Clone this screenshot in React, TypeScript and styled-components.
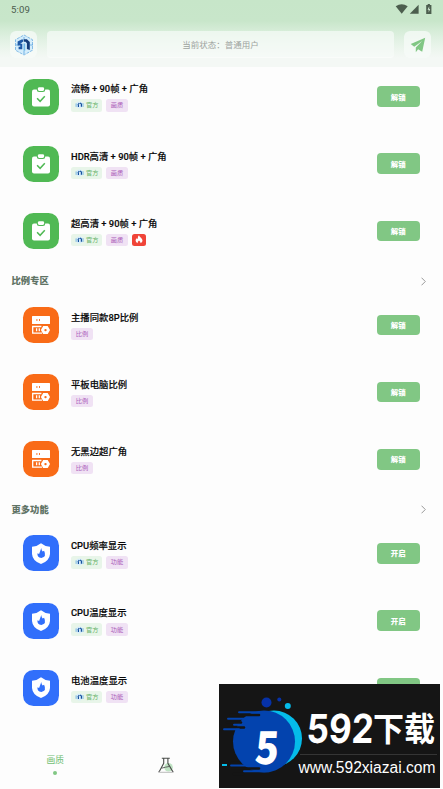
import React from "react";
import styled, { createGlobalStyle } from "styled-components";

const Global = createGlobalStyle`
  * { box-sizing: border-box; }
  html, body { margin: 0; background: #fdfdfd; overflow: hidden; }
  body { font-family: Roboto, "Noto Sans CJK SC", sans-serif; }
  svg { display: block; flex: none; }
`;

const Screen = styled.div`
  position: relative;
  width: 443px;
  height: 789px;
  overflow: hidden;
  display: flex;
  flex-direction: column;
  background: #fdfdfd;
`;

const Header = styled.header`
  flex: none;
  height: 67px;
  background: linear-gradient(#c7e6c9 0, #c8e6ca 21px, #d5ecd7 30px, #e3f2e5 41px, #eef6ef 51px, #f4f8f5 58px, #f4f8f5 100%);
`;

const StatusBar = styled.div`
  height: 31px;
  padding: 4px 10px 0 11px;
  display: flex;
  justify-content: space-between;
  font-size: 9.6px;
  line-height: 12px;
  letter-spacing: 0.1px;
  color: #4c5e4e;
`;

const TopRow = styled.div`
  display: flex;
  gap: 10px;
  padding: 0 12px 0 10px;
`;

const Tile = styled.div`
  width: 27px;
  height: 27px;
  border-radius: 6px;
  display: grid;
  place-items: center;
  background: rgba(247, 251, 248, 0.75);
`;

const StatusField = styled.div`
  flex: 1;
  height: 27px;
  border-radius: 4px;
  display: grid;
  place-items: center;
  background: rgba(247, 251, 248, 0.7);
  border-bottom: 1px solid #fafcfa;
  font-size: 8.5px;
  color: #9da39e;
`;

const List = styled.main`
  flex: 1;
  min-height: 0;
  overflow: hidden;
  margin-top: -4.1px;
`;

const SectionHead = styled.div`
  height: 26.9px;
  padding: 7px 17px 0 11.5px;
  display: flex;
  align-items: center;
  justify-content: space-between;
  font-size: 9.3px;
  font-weight: 900;
  line-height: 20px;
  color: #607365;
`;

const Row = styled.div`
  height: 67.2px;
  display: flex;
  align-items: center;
  padding: 0 23px;
`;

const AppIcon = styled.div<{ $color: string }>`
  width: 36px;
  height: 36px;
  border-radius: 10.5px;
  display: grid;
  place-items: center;
  background: ${(p) => p.$color};
`;

const Info = styled.div`
  flex: 1;
  margin-left: 12px;
  padding-top: 1px;
`;

const Title = styled.div`
  font-size: 9.35px;
  line-height: 13px;
  font-weight: 500;
  color: #080808;
  -webkit-text-stroke: 0.15px #080808;
  white-space: pre;
  margin-bottom: 4px;
`;

const Tags = styled.div`
  display: flex;
  gap: 4px;
`;

const tones = {
  green: ["#e8f5e9", "#65b368"],
  purple: ["#f0e2f4", "#aa5bb9"],
  red: ["#f04438", "#ffffff"],
} as const;

const Tag = styled.span<{ $tone: keyof typeof tones; $width: number }>`
  width: ${(p) => p.$width}px;
  height: 12.3px;
  border-radius: 2.5px;
  display: flex;
  align-items: center;
  justify-content: center;
  gap: 2.5px;
  font-size: 6.2px;
  line-height: 12px;
  background: ${(p) => tones[p.$tone][0]};
  color: ${(p) => tones[p.$tone][1]};
`;

const ActionButton = styled.button`
  width: 43.5px;
  height: 20.5px;
  border: 0;
  padding: 0;
  border-radius: 4px;
  background: #81c784;
  color: #fff;
  font: 900 7.4px/20px "Noto Sans CJK SC", sans-serif;
`;

const Nav = styled.nav`
  flex: none;
  height: 67px;
  padding-top: 30px;
  display: grid;
  grid-template-columns: repeat(4, 1fr);
  justify-items: center;
  background: #fdfdfd;
`;

const NavItem = styled.div<{ $iconOnly?: boolean }>`
  display: flex;
  flex-direction: column;
  align-items: center;
  padding-top: ${(p) => (p.$iconOnly ? 5 : 0)}px;
  font-size: 8.8px;
  line-height: 17px;
  color: #70bd73;
`;

const Dot = styled.i`
  width: 4px;
  height: 4px;
  margin-top: 1.5px;
  border-radius: 50%;
  background: #81c784;
`;

const Banner = styled.aside`
  position: absolute;
  left: 219px;
  top: 684px;
  width: 221px;
  height: 104px;
  background: #151515;
`;

const StatusIcons = () => (
  <svg width="38" height="12" viewBox="0 0 38 12" fill="#4c5e4e">
    <path d="M.7 2.3Q6.7-2 12.7 2.3L6.7 9.8Z" />
    <path d="M23.6.8V9.8H14.8Z" />
    <path d="M31.2 1h1.5V0h2.2v1h1.5v9h-5.2Z" />
    <path d="M34.2 2.3 32.6 5.8h1.1v2.7l1.5-3.6h-1Z" fill="#d4ecd5" />
  </svg>
);

const HexLogo = () => (
  <svg width="20" height="22" viewBox="0 0 20 22">
    <path d="M10 1 18.5 5.7V16.2L10 21 1.5 16.2V5.7Z" fill="#d4edfb" stroke="#79b6e4" strokeWidth=".9" strokeDasharray="3 1" />
    <path d="M10 3V6M10 17v3M2 11H5M16 11h3" stroke="#4c9bdd" strokeWidth=".7" />
    <path d="M3.6 7.6 7.6 5.400H9.200V7.600L6.200 9.800H8.300V15.200H4.600V12.800H6.300V11.500H3.600Z" fill="#1f5aa6" />
    <path d="M9.800 5.300h3.100l2.900 2.600v8.100l-2.900-1V9.300l-1.400-1.600H9.800Z" fill="#153d7b" />
    <path d="M9.500 9.500h1.700v7.300H9.500Z" fill="#72bae8" />
  </svg>
);

const PlaneIcon = () => (
  <svg width="16" height="16" viewBox="0 0 16 16" fill="#81c784">
    <path d="M15.200.8.700 7l3.500 2.700L12.200 4 5.800 10.600v4.600l2.300-2.900 4.100 2.500Z" />
  </svg>
);

const ClipboardIcon = () => (
  <svg width="18" height="20" viewBox="0 0 18 20">
    <rect y="2.500" width="18" height="17" rx="2" fill="#fff" />
    <rect x="4.800" y="-.3" width="8.400" height="5.300" rx="2.300" fill="#50b954" />
    <rect x="5.900" y=".2" width="6.200" height="3.800" rx="1.400" fill="#fff" />
    <path d="m5.100 11.300 3 3 4.700-5" fill="none" stroke="#50b954" strokeWidth="1.500" />
  </svg>
);

const ServerIcon = () => (
  <svg width="18" height="18" viewBox="0 0 18 18">
    <rect width="18" height="8" rx=".5" fill="#fff" />
    <path d="M4.900 3V5M7.500 3V5" stroke="#f96b17" strokeWidth=".9" />
    <path d="M9.400 10.500H.7V17.200H10" fill="none" stroke="#fff" strokeWidth="1.300" />
    <path d="M4.600 12.200v3M7.300 12.200v3" stroke="#fff" strokeWidth="1.300" />
    <path d="m11.200 10.100 4.500 0 2.300 4-2.300 4-4.500 0-2.300-4Z" fill="#fff" />
    <circle cx="13.500" cy="14.100" r="1.200" fill="#f96b17" />
  </svg>
);

const ShieldIcon = () => (
  <svg width="18" height="21" viewBox="0 0 18 21">
    <path d="M9 .2Q13 3.500 18 3.800V11Q17.500 18 9 21 0.500 18 0 11V3.800Q5 3.500 9 .2Z" fill="#fff" />
    <path d="M9.300 5.100Q9.400 7.200 10.600 8.600L12.100 7.800Q15 13.900 9.400 15 4.800 14.500 5.500 10.300L7.100 11Z" fill="#316ffb" />
  </svg>
);

const OfficialMark = () => (
  <svg width="9" height="8" viewBox="0 0 9 8" fill="none">
    <circle cx="4.500" cy="4" r="3.400" fill="#d8eefb" />
    <path d="M1.100 2.400v3.500M8 2.200V6" stroke="#62a9dc" strokeWidth=".8" />
    <path d="M2.800 3.800 4.300 2.200M3.400 4V6M5 1.900l1.400 1.200V5.700" stroke="#17529c" strokeWidth="1.200" />
  </svg>
);

const FlameIcon = () => (
  <svg width="8" height="9" viewBox="0 0 8 9">
    <path d="M4 .3Q4.500 1.900 6 2.800 8.300 5.200 7 7L5.700 8.300Q5.500 6.300 4 5.400 2.500 6.300 2.500 8.300.200 7.200.7 4.800L1.600 3.200 2.800 4Q2.500 1.800 4 .3Z" fill="#fff" />
  </svg>
);

const Chevron = () => (
  <svg width="5" height="9" viewBox="0 0 5 9">
    <path d="m.500.700 3.800 3.800-3.800 3.800" fill="none" stroke="#999" strokeWidth="1" />
  </svg>
);

const FlaskIcon = () => (
  <svg width="16" height="17" viewBox="0 0 16 17" fill="none">
    <circle cx="10.500" cy="10.300" r="4.300" fill="#bfe3c3" />
    <path d="M3.800 1.300h8M5.700 1.300v5L1.300 14.600M9.900 1.300v5L14.800 14.600" stroke="#4a4d4a" strokeWidth="1.100" />
    <path d="M3.500 11.200l4-1 4.200-.8M1 14v1.500M14.900 14v1.500" stroke="#555" strokeWidth=".9" />
    <path d="M1.500 15.300h13" stroke="#bbb" />
  </svg>
);

const WatermarkArt = () => (
  <svg width="221" height="104" viewBox="0 0 221 104">
    <circle cx="55" cy="54.500" r="28" fill="#05bce9" />
    <circle cx="45" cy="57.500" r="31" fill="#0343ae" />
    <path d="M12 31H40M8 38.500H22M10 43.500H25" stroke="#151515" strokeWidth="2.600" strokeLinecap="round" />
    <path d="M14 84.500H40M20 79H13M15 90H24" stroke="#151515" strokeWidth="2.600" strokeLinecap="round" />
    <path d="M20 28.300H40M9 34.700H28M5 45.300H20M15 40.800H20M12 81.500H40M25 87.300H50" stroke="#0343ae" strokeWidth="1.900" strokeLinecap="round" />
    <path d="M3 81H8" stroke="#05bce9" strokeWidth="2" />
    <circle cx="47.500" cy="18.500" r="5" fill="#0631a7" />
    <circle cx="60.300" cy="15.500" r="2" fill="#0631a7" />
    <circle cx="68.800" cy="22" r="3" fill="#05bce9" />
    <text transform="translate(35 80) skewX(-4)" textLength="24" lengthAdjust="spacingAndGlyphs" fill="#fff" fontFamily="Noto Sans CJK SC, sans-serif" fontSize="45" fontWeight="900">5</text>
    <text transform="translate(87 59) skewX(-3)" textLength="67" lengthAdjust="spacingAndGlyphs" fill="#fff" fontFamily="Inter, sans-serif" fontSize="40" fontWeight="700">592</text>
    <text x="154" y="56.500" textLength="62" lengthAdjust="spacingAndGlyphs" fill="#fff" fontFamily="Noto Sans CJK SC, sans-serif" fontSize="33" fontWeight="700">下载</text>
    <path d="M81 70.500H218" stroke="#353535" />
    <text x="79.500" y="89" textLength="137" lengthAdjust="spacingAndGlyphs" fill="#fff" fontFamily="Liberation Sans, sans-serif" fontSize="15.800">www.592xiazai.com</text>
  </svg>
);

type Kind = "quality" | "ratio" | "feature";
const kinds = {
  quality: { color: "#50b954", icon: ClipboardIcon, tag: "画质", action: "解锁", official: true },
  ratio: { color: "#f96b17", icon: ServerIcon, tag: "比例", action: "解锁", official: false },
  feature: { color: "#316ffb", icon: ShieldIcon, tag: "功能", action: "开启", official: true },
};

function Item({ kind, title, hot }: { kind: Kind; title: string; hot?: boolean }) {
  const k = kinds[kind];
  const Icon = k.icon;
  return (
    <Row>
      <AppIcon $color={k.color}><Icon /></AppIcon>
      <Info>
        <Title>{title}</Title>
        <Tags>
          {k.official && <Tag $tone="green" $width={31}><OfficialMark />官方</Tag>}
          <Tag $tone="purple" $width={22}>{k.tag}</Tag>
          {hot && <Tag $tone="red" $width={14}><FlameIcon /></Tag>}
        </Tags>
      </Info>
      <ActionButton>{k.action}</ActionButton>
    </Row>
  );
}

export default function App() {
  return (
    <>
      <Global />
      <Screen>
        <Header>
          <StatusBar><span>5:09</span><StatusIcons /></StatusBar>
          <TopRow>
            <Tile><HexLogo /></Tile>
            <StatusField>当前状态：普通用户</StatusField>
            <Tile><PlaneIcon /></Tile>
          </TopRow>
        </Header>
        <List>
          <Item kind="quality" title="流畅 + 90帧 + 广角" />
          <Item kind="quality" title="HDR高清 + 90帧 + 广角" />
          <Item kind="quality" title="超高清 + 90帧 + 广角" hot />
          <SectionHead>比例专区<Chevron /></SectionHead>
          <Item kind="ratio" title="主播同款8P比例" />
          <Item kind="ratio" title="平板电脑比例" />
          <Item kind="ratio" title="无黑边超广角" />
          <SectionHead>更多功能<Chevron /></SectionHead>
          <Item kind="feature" title="CPU频率显示" />
          <Item kind="feature" title="CPU温度显示" />
          <Item kind="feature" title="电池温度显示" />
        </List>
        <Nav>
          <NavItem>画质<Dot /></NavItem>
          <NavItem $iconOnly><FlaskIcon /></NavItem>
        </Nav>
        <Banner><WatermarkArt /></Banner>
      </Screen>
    </>
  );
}
